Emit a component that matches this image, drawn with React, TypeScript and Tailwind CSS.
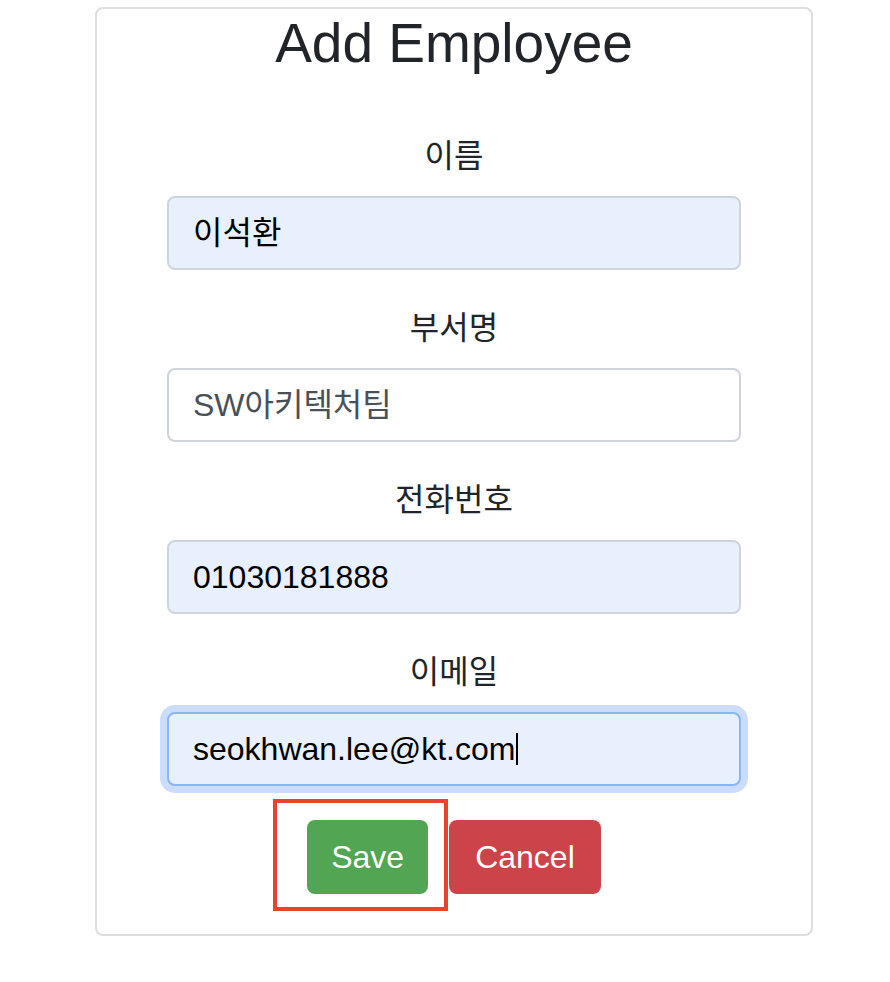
import React from "react";

const font = { fontFamily: '"Liberation Sans", "Noto Sans CJK KR", sans-serif' };

type Field = { label: string; value: string; filled: boolean; focused?: boolean };

const fields: Field[] = [
  { label: "이름", value: "이석환", filled: true },
  { label: "부서명", value: "SW아키텍처팀", filled: false },
  { label: "전화번호", value: "01030181888", filled: true },
  { label: "이메일", value: "seokhwan.lee@kt.com", filled: true, focused: true },
];

function FormGroup({ f, last }: { f: Field; last: boolean }) {
  return (
    <div className={last ? "" : "mb-[33px]"}>
      <div className="h-[48px] leading-[50px] text-[32px] text-[#212529] text-center mb-[17px]">
        {f.label}
      </div>
      <div
        className={`h-[74px] rounded-[8px] border-2 px-[24px] flex items-center text-[32px] ${
          f.filled ? "bg-[#e8f0fe] text-black" : "bg-white text-[#495057]"
        } ${
          f.focused
            ? "border-[#89b6f7] shadow-[0_0_0_7px_#cbdcfc]"
            : "border-[#ced4da]"
        }`}
      >
        <span>{f.value}</span>
        {f.focused && <span className="inline-block w-[2px] h-[32px] bg-black ml-[1px]" />}
      </div>
    </div>
  );
}

export default function App() {
  return (
    <div className="min-h-screen bg-white pt-[7px]" style={font}>
      <div className="ml-[95px] w-[718px] border-2 border-[#dedede] rounded-[8px] pb-[40px]">
        <h3 className="mt-[1px] text-center text-[55px] leading-[66px] text-[#212529]">
          Add Employee
        </h3>

        <div className="mt-[55px] px-[70px]">
          {fields.map((f, i) => (
            <FormGroup key={f.label} f={f} last={i === fields.length - 1} />
          ))}
        </div>

        <div className="mt-[34px] flex justify-center gap-[21px]">
          <div className="relative">
            <button className="h-[74px] px-[24px] rounded-[8px] bg-[#52a552] text-white text-[32px]">
              Save
            </button>
            {/* 강조 표시 박스 */}
            <div className="absolute -left-[34px] -top-[21px] -right-[20px] -bottom-[17px] border-4 border-[#e8442b] pointer-events-none" />
          </div>
          <button className="h-[74px] px-[26px] rounded-[8px] bg-[#cd434a] text-white text-[32px]">
            Cancel
          </button>
        </div>
      </div>
    </div>
  );
}
